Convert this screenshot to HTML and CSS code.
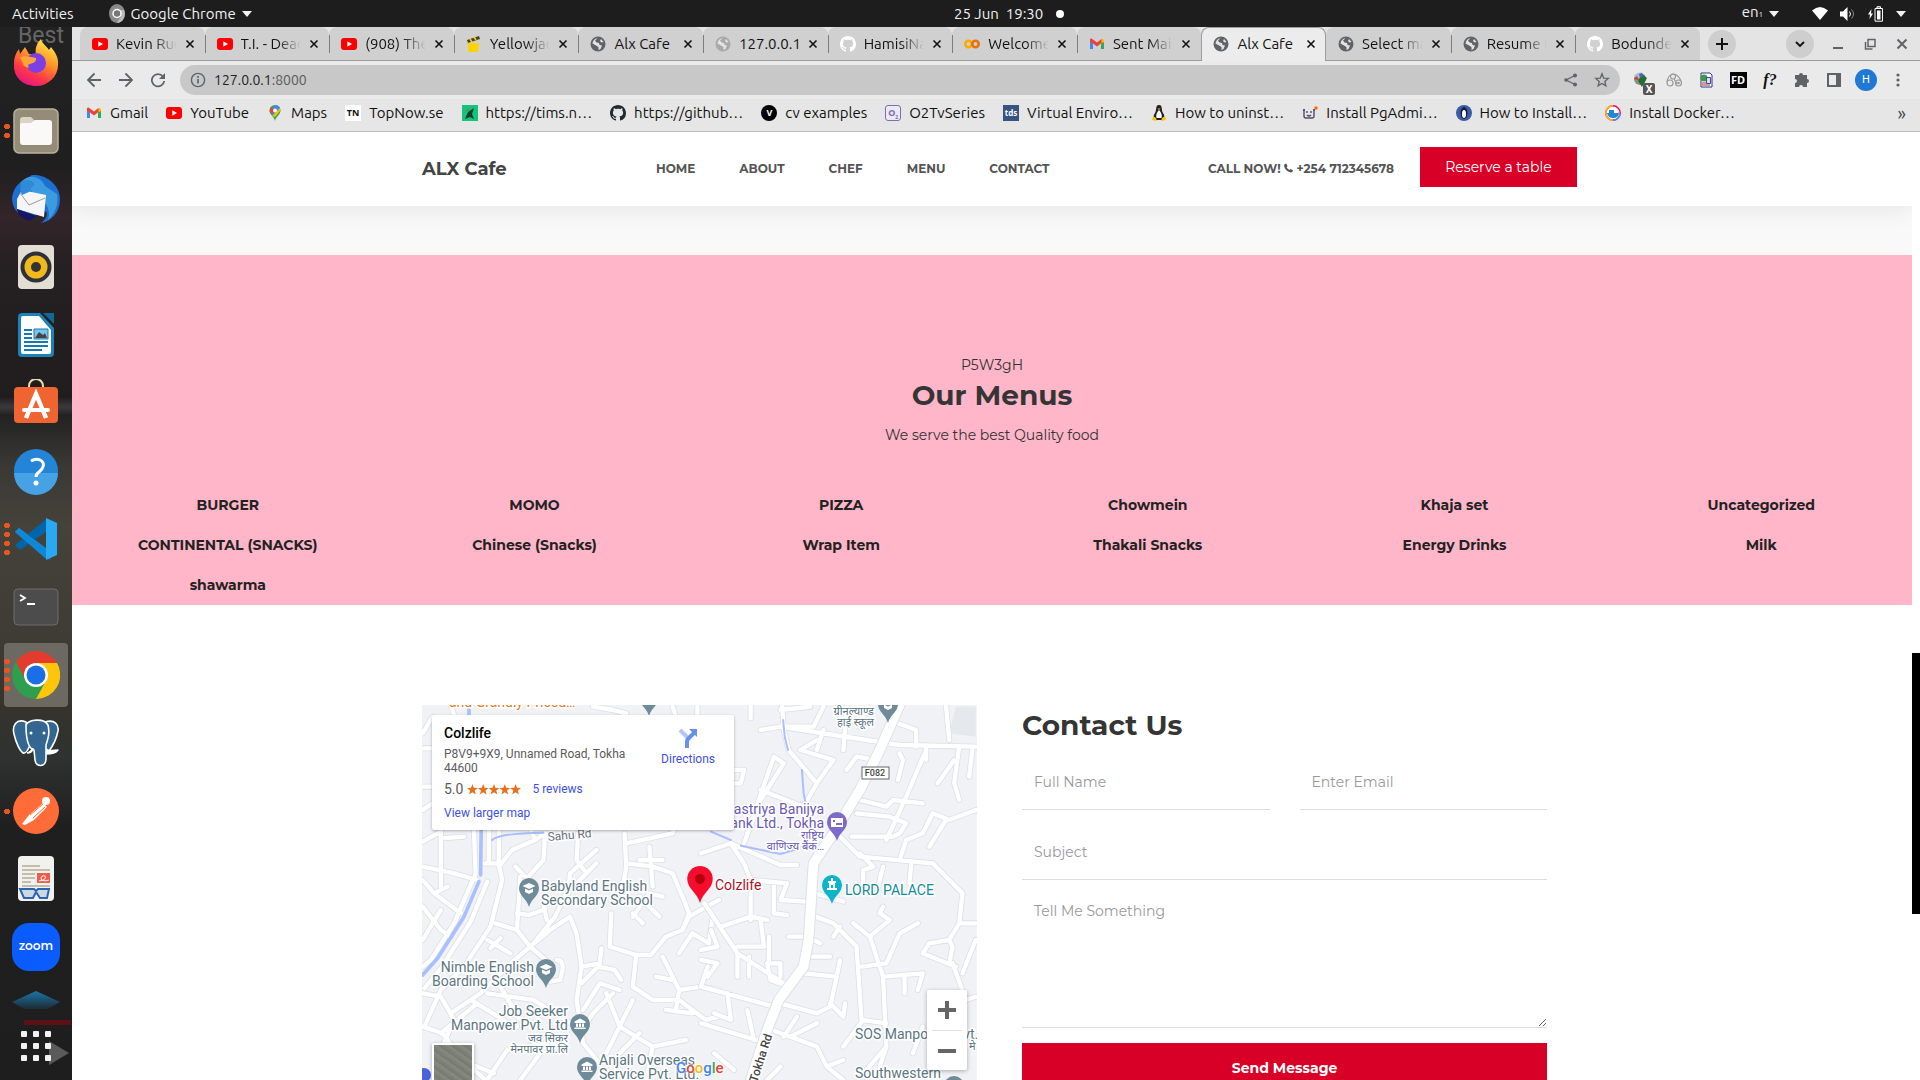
FILE: index.html
```html
<!DOCTYPE html>
<html lang="en">
<head>
<meta charset="utf-8">
<title>Alx Cafe</title>
<link rel="stylesheet" href="styles.css">
</head>
<body>
<svg class="defs" aria-hidden="true">
  <symbol id="yt" viewBox="0 0 16 16"><rect y="2" width="16" height="12" rx="3" fill="#f00"/><path d="M6.300 5.200v5.600L11 8z" fill="#fff"/></symbol>
  <symbol id="globe" viewBox="0 0 16 16"><circle cx="8" cy="8" r="7.500" fill="currentColor"/><path d="M7.500 2.200 5 4.500 6.500 6.500 9 7l.5 2L12 9.500 10.500 13 8.500 14V11L6 9.500 2.500 7.500a6 6 0 0 1 5-5.300zM11 3l2.500 3-2 .5L10 5z" fill="#e3e3e3"/></symbol>
  <symbol id="gh" viewBox="0 0 16 16"><path fill="currentColor" d="M8 0C3.580 0 0 3.580 0 8c0 3.540 2.290 6.530 5.470 7.590.4.070.55-.17.55-.38 0-.19-.01-.82-.01-1.490-2.010.37-2.530-.49-2.690-.94-.09-.23-.48-.94-.82-1.130-.28-.15-.68-.52-.01-.53.63-.01 1.080.58 1.230.82.72 1.210 1.870.87 2.330.66.07-.52.28-.87.51-1.070-1.780-.2-3.640-.89-3.640-3.950 0-.87.31-1.590.82-2.150-.08-.2-.36-1.020.08-2.120 0 0 .67-.21 2.200.82.640-.18 1.320-.27 2-.27s1.360.09 2 .27c1.530-1.040 2.200-.82 2.200-.82.44 1.100.16 1.920.08 2.120.51.56.82 1.270.82 2.150 0 3.070-1.870 3.750-3.650 3.950.29.25.54.73.54 1.480 0 1.070-.01 1.930-.01 2.200 0 .21.15.46.55.38A8.010 8.010 0 0 0 16 8c0-4.420-3.580-8-8-8z"/></symbol>
  <symbol id="gmail" viewBox="0 0 16 16"><path d="M1 4v9h3V7z" fill="#4285f4"/><path d="M15 4v9h-3V7z" fill="#34a853"/><path d="M12 7.500V4l1.500-1.200L15 4v2z" fill="#fbbc04"/><path d="M1 4c0-1.500 1.200-1.800 2.200-1.100L8 6.500l4.500-3.500v4L8 10.500 4 7.500 1 5.500z" fill="#ea4335"/></symbol>
  <symbol id="x" viewBox="0 0 16 16"><path d="m4.500 4.500 7 7m0-7-7 7" stroke="currentColor" stroke-width="1.600"/></symbol>
  <symbol id="caret" viewBox="0 0 10 6"><path d="M0 0h10L5 6z" fill="currentColor"/></symbol>
  <symbol id="pin" viewBox="0 0 20 29"><path d="M10 29C8 21 0 18 0 10a10 10 0 0 1 20 0c0 8-8 11-10 19z" fill="currentColor"/></symbol>
  <symbol id="cap" viewBox="0 0 20 29"><use href="#pin"/><path d="m3.500 8 6.500-3 6.500 3-6.500 3zM6 10.500v3.500l4 2 4-2v-3.500l-4 2z" fill="#fff"/></symbol>
  <symbol id="civic" viewBox="0 0 20 29"><use href="#pin"/><path d="M4.500 7.500 10 4.500l5.500 3V9h-11zM6 9.500h2V13H6zm3 0h2V13H9zm3 0h2V13h-2zM4.500 13.500h11V15h-11z" fill="#fff"/></symbol>
</svg>

<header class="topbar">
  <button>Activities</button>
  <button class="app-menu"><svg width="16" height="19" viewBox="0 0 16 19"><ellipse cx="8" cy="9.500" rx="8" ry="9.500" fill="#8a8a8a"/><path d="M8 6h7a8 9 0 0 1-7 13l4-7z" fill="#bbb"/><circle cx="8" cy="9.500" r="4" fill="#777" stroke="#fff" stroke-width="1.500"/></svg>Google Chrome<svg width="10" height="6"><use href="#caret"/></svg></button>
  <button class="clock">25 Jun&nbsp; 19:30<i class="dot"></i></button>
  <button class="lang"><span>en<small>1</small></span><svg width="10" height="6"><use href="#caret"/></svg></button>
  <button class="sys" aria-label="System">
    <svg width="16" height="13" viewBox="0 0 16 13"><path d="M0 3.500Q8-3.500 16 3.500L8 13z" fill="#fff"/></svg>
    <svg width="16" height="14" viewBox="0 0 16 14"><path d="M0 4.500h3L7.500 0v14L3 9.500H0z" fill="#fff"/><path d="M9.500 4.500q2 2.500 0 5" stroke="#fff" fill="none"/><path d="M11.500 2.500q4 4.500 0 9" stroke="#888" fill="none"/></svg>
    <svg width="16" height="16" viewBox="0 0 16 16"><path d="M3.500 3 0 8.500h2L1.500 13 5 7.500H3z" fill="#fff"/><path d="M7 2.500h7.500v12.700H7zM9 .7h3.500v1.500H9z" stroke="#fff" fill="none"/><path d="M9 4.500h3.500v9H9z" fill="#fff"/></svg>
    <svg width="10" height="6"><use href="#caret"/></svg>
  </button>
</header>

<div class="desktop">
<nav class="dock" aria-label="Dock">
  <span class="ghost-text">Best</span><i class="ghost-bar"></i><i class="ghost-play"></i>
  <button aria-label="Firefox"><svg viewBox="0 0 48 48"><defs><linearGradient id="ff" x1=".8" y1="0" x2=".3" y2="1"><stop offset="0" stop-color="#fff44f"/><stop offset=".4" stop-color="#ff9a28"/><stop offset=".75" stop-color="#ff3647"/><stop offset="1" stop-color="#e31587"/></linearGradient></defs><path d="M29 0c1 5 5 6 8 11l2-3c4 5 8 11 7 18A22 21 0 0 1 24 47C11 47 1 38 2 25 2 18 4 14 7 10l1 5 5-7 4 7 7 1c-1-6 0-11 5-16z" fill="url(#ff)"/><circle cx="24" cy="24" r="10" fill="#7b3fe4"/><path d="M8 18c7-2 11 0 16 1 1 5-5 5-8 7 2 5-2 2-4 1z" fill="#ffa436"/></svg></button>
  <button class="run2" aria-label="Files"><svg viewBox="0 0 48 48"><rect x="2" y="2" width="44" height="44" rx="5" fill="#948c78" stroke="#b9b29f" stroke-width="1.500"/><path d="M8 13q0-3 3-3h8l4 4h14q3 0 3 3v4H8z" fill="#d9d4c6"/><path d="M8 18q0-2 2-2h9l4-3h14q3 0 3 3v19q0 3-3 3H11q-3 0-3-3z" fill="#faf9f7"/></svg></button>
  <button aria-label="Thunderbird"><svg viewBox="0 0 48 48"><path d="M20 0c14-1 28 10 28 24 0 14-9 22-19 24 5-4 8-9 4-12L16 44C5 40 0 32 0 23 1 14 6 8 12 5z" fill="#1d6fd1"/><path d="M9 7c8-9 20-6 24 4l12 8c2 10-2 20-9 26 3-9-1-17-10-23z" fill="#3b9ae0"/><path d="m5 24 5-9 24 5-2 22-27-8z" fill="#f5f5f7"/><path d="m8 18 9 12 16-7" stroke="#999" fill="none"/><path d="m5 34 20 7-8 5C10 44 5 39 5 34z" fill="#1b1464"/><path d="M9 7q8-5 14 2-4 3-6 8l-7 3q-3-6-1-13z" fill="#2f8ad8"/></svg></button>
  <button aria-label="Rhythmbox"><svg viewBox="0 0 48 48"><rect x="6" y="2" width="36" height="44" rx="4" fill="#e2ded4"/><circle cx="24" cy="24" r="15.500" fill="#303038"/><circle cx="24" cy="24" r="11.500" fill="#f0b91c"/><circle cx="24" cy="24" r="5" fill="#333"/></svg></button>
  <button aria-label="LibreOffice Writer"><svg viewBox="0 0 48 48"><path d="M10 2h18l14 15v25q0 4-4 4H10q-4 0-4-4V6q0-4 4-4z" fill="#1b83b7"/><path d="M11 5h16l12 14v22q0 2-2 2H11q-2 0-2-2V7q0-2 2-2z" fill="#fff"/><path d="M31 2h11v11z" fill="#0f679c"/><path d="M12 19h8M12 23h8M12 27h8M12 31h24M12 35h24M12 39h18" stroke="#1878b0" stroke-width="2"/><path d="M22 18h14v10H22z" fill="#7cc4ec" stroke="#1878b0"/><path d="m23 27 4-6 4 3 2-2 2 5z" fill="#444"/></svg></button>
  <button aria-label="Software"><svg viewBox="0 0 48 48"><path d="M17 11V7a7 7 0 0 1 14 0v4" fill="none" stroke="#f3dba8" stroke-width="2"/><rect x="2" y="8" width="44" height="36" rx="4" fill="#ef6430"/><path d="m14 39 10-24 10 24" fill="none" stroke="#fff" stroke-width="4.500"/><path d="M12 31h24" stroke="#fff" stroke-width="4" stroke-linecap="round"/></svg></button>
  <button aria-label="Help"><svg viewBox="0 0 48 48"><circle cx="24" cy="24" r="22" fill="#2384d8"/><path d="M2 26a22 22 0 0 0 44 0z" fill="#46a2e4"/><path d="M19 14q5-3 9-1c6 3 3 9-1 12q-3 2-3 5" fill="none" stroke="#fff" stroke-width="3"/><circle cx="24" cy="36" r="2.500" fill="#fff"/></svg></button>
  <button class="run4" aria-label="Visual Studio Code"><svg viewBox="0 0 48 48"><path d="M3 17 7 13 38 36v9z" fill="#0a84d0"/><path d="M3 30 34 4v13L8 35z" fill="#0065a9"/><path d="M3 17 7 13 36 35v9l-3-1z" fill="#1088d8"/><path d="m34 3 11 5v32l-11 5z" fill="#28a9f2"/></svg></button>
  <button aria-label="Terminal"><svg viewBox="0 0 48 48"><rect x="2" y="6" width="44" height="36" rx="4" fill="#4c4c4c" stroke="#6c6c6c"/><path d="m8 12 5 3-5 3M15 21h8" fill="none" stroke="#fff" stroke-width="1.800"/></svg></button>
  <button class="run4 current" aria-label="Google Chrome"><svg viewBox="0 0 48 48"><circle cx="24" cy="24" r="24" fill="#2f9e4f"/><path d="M24 12h21a24 24 0 0 1-21 36l11-20z" fill="#fdc60a"/><path d="m4 11 9 17 11-16h21A24 24 0 0 0 4 11z" fill="#e33b2e"/><circle cx="24" cy="24" r="12" fill="#fff"/><circle cx="24" cy="24" r="9.500" fill="#1a6fe8"/></svg></button>
  <button aria-label="pgAdmin"><svg viewBox="0 0 48 48"><g fill="#336791" stroke="#fff" stroke-width="1.600" stroke-linejoin="round"><path d="M14 3C4-1 0 7 2 15c2 9 6 17 9 19 4 1 5-5 7-7zM33 3c10-3 14 3 13 9-2 10-6 16-9 20l-6-4z"/><path d="M14 6c3-6 18-7 22 0 2 8 0 14-2 20v14c0 8-10 9-11 1l-1-10c-8-2-8-18-8-25z"/><path d="M15 34q5 0 6-5M34 32l12-1q-3 4-12 4" fill="#fff"/></g><circle cx="19" cy="14" r="1.500" fill="#fff"/><circle cx="32" cy="14" r="1.500" fill="#fff"/></svg></button>
  <button class="run1" aria-label="Postman"><svg viewBox="0 0 48 48"><circle cx="24" cy="24" r="23" fill="#ff6c37"/><circle cx="34" cy="14" r="4" fill="#fff"/><path d="m31 16 4 4-13 13-9 5-3-1 7-9z" fill="#fff"/><path d="m18 28 13-11M21 31l12-11" stroke="#ff6c37"/></svg></button>
  <button aria-label="Document Viewer"><svg viewBox="0 0 48 48"><rect x="6" y="1" width="36" height="45" rx="4" fill="#f1f1ef"/><path d="M10 11h18M10 15h28M10 19h13M10 23h13M10 27h9M10 31h28" stroke="#c3bda9" stroke-width="2"/><path d="M25 18h13v10H25z" fill="#f15b4c"/><path d="M27 26q8-1 6-5-4-1-4 3 2 3 8 1" stroke="#fff" fill="none"/><path d="M8 34h14l2 2 2-2h11l-2 9h-7l-4-6-3 6h-9z" fill="#cfd8e2" stroke="#2a65b4" stroke-width="2"/></svg></button>
  <button aria-label="Zoom"><span class="zoom-icon">zoom</span></button>
  <button class="cut" aria-label="More"><svg viewBox="0 0 48 18"><defs><linearGradient id="vf" x2="0" y2="1"><stop stop-color="#1b75a8"/><stop offset="1" stop-color="#1b75a8" stop-opacity=".15"/></linearGradient></defs><path d="M24 0 48 11 36 18H12L0 11z" fill="url(#vf)"/></svg></button>
  <button class="apps" aria-label="Show applications"><i></i><i></i><i></i><i></i><i></i><i></i><i></i><i></i><i></i></button>
</nav>

<main class="window">
  <div class="tabstrip">
    <div class="tabs">
      <div class="tab"><svg><use href="#yt"/></svg><a href="#">Kevin Rudolf</a><button aria-label="Close"><svg><use href="#x"/></svg></button></div>
      <div class="tab"><svg><use href="#yt"/></svg><a href="#">T.I. - Dead And</a><button aria-label="Close"><svg><use href="#x"/></svg></button></div>
      <div class="tab"><svg><use href="#yt"/></svg><a href="#">(908) The Weeknd</a><button aria-label="Close"><svg><use href="#x"/></svg></button></div>
      <div class="tab"><svg viewBox="0 0 16 16"><path d="M2 7h11l-1 9H2z" fill="#fdd20a"/><path d="m1 4 12-4 1 3L2 7z" fill="#4a4320"/><path d="m4 3 2 3m2-5 2 3" stroke="#fdd20a" stroke-width="1.500"/></svg><a href="#">Yellowjackets</a><button aria-label="Close"><svg><use href="#x"/></svg></button></div>
      <div class="tab whole"><svg><use href="#globe"/></svg><a href="#">Alx Cafe</a><button aria-label="Close"><svg><use href="#x"/></svg></button></div>
      <div class="tab whole"><svg class="pale"><use href="#globe"/></svg><a href="#">127.0.0.1</a><button aria-label="Close"><svg><use href="#x"/></svg></button></div>
      <div class="tab"><svg class="white"><use href="#gh"/></svg><a href="#">HamisiNas</a><button aria-label="Close"><svg><use href="#x"/></svg></button></div>
      <div class="tab"><svg viewBox="0 0 16 16" fill="none" stroke-width="2.600"><circle cx="4.500" cy="8" r="3.200" stroke="#f9ab00"/><circle cx="11.500" cy="8" r="3.200" stroke="#e8710a"/></svg><a href="#">Welcome To</a><button aria-label="Close"><svg><use href="#x"/></svg></button></div>
      <div class="tab"><svg><use href="#gmail"/></svg><a href="#">Sent Mail - h</a><button aria-label="Close"><svg><use href="#x"/></svg></button></div>
      <div class="tab whole active"><svg><use href="#globe"/></svg><a href="#">Alx Cafe</a><button aria-label="Close"><svg><use href="#x"/></svg></button></div>
      <div class="tab"><svg><use href="#globe"/></svg><a href="#">Select match</a><button aria-label="Close"><svg><use href="#x"/></svg></button></div>
      <div class="tab"><svg><use href="#globe"/></svg><a href="#">Resume Build</a><button aria-label="Close"><svg><use href="#x"/></svg></button></div>
      <div class="tab"><svg class="white"><use href="#gh"/></svg><a href="#">Bodunde123</a><button aria-label="Close"><svg><use href="#x"/></svg></button></div>
    </div>
    <button class="round" aria-label="New tab"><svg width="16" height="16" viewBox="0 0 16 16"><path d="M8 2v12M2 8h12" stroke="#111" stroke-width="2"/></svg></button>
    <button class="round search" aria-label="Search tabs"><svg width="16" height="16" viewBox="0 0 16 16"><path d="m4 6 4 4 4-4" stroke="#111" stroke-width="1.800" fill="none"/></svg></button>
    <div class="winctl">
      <button aria-label="Minimize"><svg viewBox="0 0 16 16"><path d="M3 12h10" stroke="#5f6368" stroke-width="2"/></svg></button>
      <button aria-label="Restore"><svg viewBox="0 0 16 16"><path d="M6 3.500h7v7H6zM3.500 6v7h7" fill="none" stroke="#5f6368" stroke-width="1.500"/></svg></button>
      <button aria-label="Close window"><svg viewBox="0 0 16 16"><path d="m3.500 3.500 9 9m0-9-9 9" stroke="#5f6368" stroke-width="2"/></svg></button>
    </div>
  </div>

  <div class="toolbar">
    <div class="navbtns">
      <button aria-label="Back"><svg viewBox="0 0 16 16"><path d="M15 8H2m6.500-6.500L2 8l6.500 6.500" fill="none" stroke="#5f6368" stroke-width="1.800"/></svg></button>
      <button aria-label="Forward"><svg viewBox="0 0 16 16"><path d="M1 8h13M7.500 1.500 14 8l-6.500 6.500" fill="none" stroke="#5f6368" stroke-width="1.800"/></svg></button>
      <button aria-label="Reload"><svg viewBox="0 0 16 16"><path d="M13 4.500A6.200 6.200 0 1 0 14.200 9" fill="none" stroke="#5f6368" stroke-width="1.800"/><path d="M15 1v6H9z" fill="#5f6368"/></svg></button>
    </div>
    <div class="omnibox">
      <svg width="16" height="16" viewBox="0 0 16 16"><circle cx="8" cy="8" r="6.600" fill="none" stroke="#5f6368" stroke-width="1.400"/><path d="M8 7v4.500M8 4v1.700" stroke="#5f6368" stroke-width="1.700"/></svg>
      <span class="url"><b>127.0.0.1</b>:8000</span>
      <button aria-label="Share"><svg viewBox="0 0 16 16"><path d="M13 3.500 4 8l9 4.500" fill="none" stroke="#5f6368" stroke-width="1.300"/><g fill="#5f6368"><circle cx="13" cy="3.500" r="2"/><circle cx="4" cy="8" r="1.800"/><circle cx="13" cy="12.500" r="2"/></g></svg></button>
      <button aria-label="Bookmark"><svg viewBox="0 0 16 16"><path d="m8 1.800 1.700 4.300 4.600.3-3.500 3 1.100 4.500L8 11.500l-3.900 2.400 1.100-4.500-3.500-3 4.600-.3z" fill="none" stroke="#5f6368" stroke-width="1.300"/></svg></button>
    </div>
    <div class="ext">
      <button aria-label="Download manager"><svg viewBox="0 0 18 18"><circle cx="7" cy="8" r="6" fill="#8b8f86"/><path d="M1 5q4-5 9-3L6 8z" fill="#b4bcc2"/><path d="m9 3 5 4-5 9-4-6z" fill="#276c2f"/><path d="m1 8 3-3 2 4z" fill="#c93b2c"/><path d="m6 3 3-1 1 4-3 1z" fill="#3a6ac8"/></svg><span class="badge">X</span></button>
      <button aria-label="Links"><svg viewBox="0 0 18 18" fill="none" stroke="#9a9a9a" stroke-width="1.200"><circle cx="5" cy="12" r="3"/><circle cx="13.500" cy="12" r="3"/><circle cx="13.500" cy="12" r=".7"/><circle cx="8" cy="5.500" r="2.500"/><path d="M2 11q1-7 6-8 5 0 8 7M9 8l3 5"/></svg></button>
      <button aria-label="Page info"><svg viewBox="0 0 18 18"><path d="M4 2h9l2 2v12H4z" fill="#fff" stroke="#338"/><circle cx="7" cy="7" r="3.500" fill="#3a9a4a"/><path d="M5 12h8M5 14h8" stroke="#a33"/><path d="M9.500 6.500h4v6h-4z" fill="#dde" stroke="#44a"/></svg></button>
      <button aria-label="FD"><span class="fd">FD</span></button>
      <button aria-label="Font finder"><span class="ff">f?</span></button>
      <button aria-label="Extensions"><svg viewBox="0 0 18 18"><path d="M6 4a2 2 0 1 1 4 0h4v4a2 2 0 1 1 0 4v4h-4a2 2 0 0 0-4 0H2v-4a2 2 0 0 0 0-4V4z" fill="#5f6368"/></svg></button>
      <button aria-label="Side panel"><svg viewBox="0 0 18 18"><path d="M3 3h12v12H3z" fill="none" stroke="#5f6368" stroke-width="2"/><path d="M11 3h4v12h-4z" fill="#5f6368"/></svg></button>
      <button aria-label="Profile"><span class="avatar">H</span></button>
      <button aria-label="Menu"><svg viewBox="0 0 18 18" fill="#5f6368"><circle cx="9" cy="4" r="1.600"/><circle cx="9" cy="9" r="1.600"/><circle cx="9" cy="14" r="1.600"/></svg></button>
    </div>
  </div>

  <nav class="bookmarks" aria-label="Bookmarks">
    <a href="#"><svg><use href="#gmail"/></svg>Gmail</a>
    <a href="#"><svg><use href="#yt"/></svg>YouTube</a>
    <a href="#"><svg viewBox="0 0 16 16"><path d="M8 0a5.500 5.500 0 0 1 5.500 5.500C13.500 10 9 11 8 16c-1-5-5.500-6-5.500-10.500A5.500 5.500 0 0 1 8 0z" fill="#34a853"/><path d="M8 0a5.500 5.500 0 0 1 5 3L5 10 3 7z" fill="#4285f4"/><path d="M4 2 2.500 6l2 3L8 5z" fill="#ea4335"/><path d="M13 3 5 11l3 1 5-6z" fill="#fbbc04"/><circle cx="8" cy="5.500" r="2" fill="#fff"/></svg>Maps</a>
    <a href="#"><i class="fav tn">TN</i>TopNow.se</a>
    <a href="#"><svg viewBox="0 0 16 16"><path d="M0 0h16v16H0z" fill="#12c579"/><path d="m3 14 3-7 6-4-2 6 2 5-4-2z" fill="#173d2d"/><path d="m4 6 3-2" stroke="#e43"/></svg>https://tims.n…</a>
    <a href="#"><svg><use href="#gh"/></svg>https://github…</a>
    <a href="#"><i class="fav v">V</i>cv examples</a>
    <a href="#"><i class="fav o2">O<sub>2</sub></i>O2TvSeries</a>
    <a href="#"><i class="fav tds">tds</i>Virtual Enviro…</a>
    <a href="#"><svg viewBox="0 0 16 16"><path d="M8 0c4 0 2 5 4 8s2 6-1 7H5c-3-1-3-4-1-7s0-8 4-8z" fill="#222"/><path d="M8 5c2 2 3.500 5 2.500 8h-5C4.500 10 6 7 8 5z" fill="#fff"/><path d="m2 11 3 2 1 3-5-1zm12 0-3 2-1 3 5-1zM6.500 3.500h3L8 5z" fill="#f5c518"/></svg>How to uninst…</a>
    <a href="#"><svg viewBox="0 0 16 16" fill="none" stroke="#54496f" stroke-width="1.400"><path d="M2 4v7q0 2 2 2h6q2 0 2-2V4M1 5h2m8 0h2M5 6v2m4-2v2M5 10q2 2 4 0"/><circle cx="14" cy="3" r="1" stroke="#f60" fill="#f60"/></svg>Install PgAdmi…</a>
    <a href="#"><svg viewBox="0 0 16 16"><circle cx="8" cy="8" r="8" fill="#3b5aa8"/><ellipse cx="8" cy="8" rx="3.500" ry="6" fill="#182038"/><ellipse cx="8" cy="9" rx="2" ry="4" fill="#fff"/></svg>How to Install…</a>
    <a href="#"><svg viewBox="0 0 16 16"><circle cx="8" cy="8" r="7.200" fill="#fff" stroke="#f06" stroke-width="1.500"/><path d="M8 .8A7.200 7.200 0 0 0 8 15.200" stroke="#fb0" stroke-width="1.500" fill="none"/><path d="M8 15.200A7.200 7.200 0 0 0 15 9" stroke="#39f" stroke-width="1.500" fill="none"/><path d="M2 8h11l1-1q0 6-6 6-5 0-6-5zM4 5h5v3H4z" fill="#2387d8"/></svg>Install Docker…</a>
    <button aria-label="More bookmarks">»</button>
  </nav>

  <div class="viewport">
    <div class="site">
      <header class="site-head">
        <div class="container">
          <a class="brand" href="#">ALX Cafe</a>
          <nav><a href="#">HOME</a><a href="#">ABOUT</a><a href="#">CHEF</a><a href="#">MENU</a><a href="#">CONTACT</a></nav>
          <a class="call" href="#">CALL NOW! <svg width="9" height="10" viewBox="0 0 10 10"><path d="M2.500 0 4 3 2.800 4.200Q4 6.300 5.900 7.200L7 6l3 1.500Q9.500 10 7.500 10 1 8 0 2.500 0 .5 2.500 0z" fill="currentColor"/></svg> +254 712345678</a>
          <button class="reserve">Reserve a table</button>
        </div>
      </header>
      <div class="gap"></div>
      <section class="menus">
        <p>P5W3gH</p>
        <h2>Our Menus</h2>
        <p class="sub">We serve the best Quality food</p>
        <div class="cats">
          <a href="#">BURGER</a><a href="#">MOMO</a><a href="#">PIZZA</a><a href="#">Chowmein</a><a href="#">Khaja set</a><a href="#">Uncategorized</a>
          <a href="#">CONTINENTAL (SNACKS)</a><a href="#">Chinese (Snacks)</a><a href="#">Wrap Item</a><a href="#">Thakali Snacks</a><a href="#">Energy Drinks</a><a href="#">Milk</a>
          <a href="#">shawarma</a>
        </div>
      </section>
      <section class="contact container">
        <div class="map">
          <svg class="canvas" width="555" height="450" viewBox="0 0 555 450">
            <rect width="555" height="450" fill="#f0f2f5"/>
            <defs>
              <path id="rl" d="M5 425 60 395V560M60 415l70-5M5 500l95 20 70 20M5 540l35 40 40-20M40 580l80 60M5 620l55 70 30 20M5 720l55-90M5 145h30M5 260h30M5 330l30-20M5 100l30-50M90 15l10 30M205 390V490M160 390l5 130-65 150-70 110-25 20M200 545l-50 120-90 140-50 60M235 390V490h-45M235 490l10 50-35 140-80 120-70 70-50 110M330 385l15 35 30-20-5 80-50 55-35-35M345 420l-70 30-40 50M475 400l-5 80 30 40-60 60-35 70-65 80M530 450l-80 70-5 60M500 520l30-30M300 530l-10 160 40 50 70 60M225 670l65 20M290 640l35 5 45-15M380 660l-10-50 10-20M450 650l20 50 15 100-15 100 20 130 50 60M450 650l-60 40-60 50-70 60-80 80-90 60M240 715l-30 30M200 720l70 40M485 800l55-10 5-45M485 850l50-50 50 10 20 30M600 870l-60-20-50 80M480 1000l40-60 60-60M575 640l-5 100 80 25h45l45-55 50-20 20-40 90-50M650 765l-10 95 60 40h80l80 60 40-10M615 400l5 100-10 60-30 40M620 430l140-30 20-50M620 490l80 10 60 20 30 70 20 50-20 50M690 440l10 120M660 480h70M640 650l50-70 40 10M660 590l60 60M640 640l30 30M730 770l50 100 70-10 50 10M780 870l-10 60M780 760l40-60 50 30 10-70M760 840l-50-10M560 880l40 100-40 80M640 900l-40 80 100 60 100-20M700 1040l-20 100M600 1060l60-60M740 930l80 10M200 880l140 20 130 80M5 880l55 10 40 70-40 90M240 860l60 100M150 900l100 60M410 780q30 0 10 60l-30 5M5 980l60 20 60 80 70 60M60 1000l110-90M180 990l60-30 50 20M200 1140l60-90 120-20M120 1080l100 40M300 1140l60-80M520 20l60 10 40 10M835 20v30M760 20l10 30"/>
              <path id="rr" d="M150 15v40M180 90l60-10 260 40 100 15 230 5M245 20l5 70M250 80h90l30-60M350 150l20-60M430 150l10-120M500 20l-20 60M330 20l-90 10M740 15l10 105M650 140V90l-80-30M780 140l-15 110 15 50M765 180l-50 70M250 90l15 60 85 100 50-70-100-30 50-30M350 250l-40 70M220 170l30 20-70 110-50 130M220 170l-80 230M180 270l130 50M100 210h30l-10 40H90M440 210l30-40 60 10M600 160l10 20-15 60M680 140v40M680 150l-60 140-60 130M480 300l80 20 20-20 90 10M470 340l100 10 50 20-20 30-20 10H455M820 150l-10 80M410 400l70 70 220 20 90 90-10 90M600 480l20-60 50-20 30-60 50 20 80-30M690 440l50-80M480 460l40 40-30 10v40M550 500l-20 80M635 490l-5 60M0 460l90-30 40 60 20 50v120M90 430l150 65h50M150 540l110 10-20 50 80 5M220 550v90l40 5M345 580l85 25M10 610l100 150 140 90M60 680l90-30 50 10M180 660l10 80h-80M110 760v70M145 770v60M205 710v80h35v40M265 710h55l40 20M325 770h65M200 790l10 50 40 15M0 750l50-10-20-50M0 780l50 10-30 40M345 650l55 20 70 70 15 220 75 10M400 710l20-30M460 670l50 40 60-50-30-20 10-20M510 710l40 120 10 210-20 60M485 800l75-10 40-90 55-30M550 830l120-10-15 50M615 830v50M310 820l100 10-20 90-40 20-110-30M390 910l40 40 5-40M410 830l10-50M780 670h50M780 670l-30 50-60 10-20 30 100 40M750 720l10 20-10 50M760 790l40 110 30-10M830 720l-40 100M0 860l240 65M80 880l10 80-50-20M0 970l200 60M215 990l135 50 30 60 50 40M250 1010l40-60M270 1010l80-40M140 930l20 90M0 860l20-60M430 1040l60-80M560 1040l-60 70M40 1060l60 50M240 1100l-40 40M380 1100l50-20M640 1060l30-80"/>
            </defs>
            <g transform="translate(-1 -5) scale(.331 .3333)" fill="none" stroke-linecap="round" stroke-linejoin="round">
              <use href="#rl" stroke="#dde0e7" stroke-width="18"/><use href="#rl" stroke="#fff" stroke-width="13"/>
              <path d="M145 20v25M182 385l-2 140M175 545l-45 105-80 125-45 50" stroke="#a9bfff" stroke-width="11"/><path d="M215 420q20-20 155-22" stroke="#a9bfff" stroke-width="6"/>
            </g>
            <g transform="translate(279 -5) scale(.331 .3333)" fill="none" stroke-linecap="round" stroke-linejoin="round">
              <path d="M770 20h60v90l-80-10z" fill="#e5e8ec"/>
              <use href="#rr" stroke="#dde0e7" stroke-width="18"/><use href="#rr" stroke="#fff" stroke-width="13"/>
              <path d="m600 15-60 135-60 120-80 130-60 90-15 230-15 80-75 100-35 90-50 150" stroke="#dde0e7" stroke-width="35"/>
              <path d="m600 15-60 135-60 120-80 130-60 90-15 230-15 80-75 100-35 90-50 150" stroke="#fff" stroke-width="29"/>
              <path d="M248 60l5 50 10 40M305 210l5 70 5 25M30 395l60 25M120 437l120 25 50-15" stroke="#a9bfff" stroke-width="6"/>
            </g>
            <g class="lbl">
              <text x="27" y="2" class="food">and Grandly Priced…</text>
              <text x="126" y="136" transform="rotate(-5 126 136)" class="road">Sahu Rd</text>
              <text x="119" y="186">Babyland English</text><text x="119" y="200">Secondary School</text>
              <text x="112" y="267" class="end">Nimble English</text><text x="112" y="281" class="end">Boarding School</text>
              <text x="146" y="311" class="end">Job Seeker</text><text x="146" y="325" class="end">Manpower Pvt. Ltd</text>
              <text x="146" y="337" class="end hi">जव सिकर</text><text x="146" y="348" class="end hi">मेनपावर प्रा.लि</text>
              <text x="177" y="360">Anjali Overseas</text><text x="177" y="374">Service Pvt. Ltd.</text>
              <text x="293" y="185" class="red">Colzlife</text>
              <text x="452" y="10" class="end hi">ग्रीनल्याण्ड</text><text x="452" y="21" class="end hi">हाई स्कूल</text>
              <text x="402" y="109" class="end bank">Rastriya Banijya</text><text x="402" y="123" class="end bank">Bank Ltd., Tokha</text>
              <text x="402" y="134" class="end bank hi">राष्ट्रिय</text><text x="402" y="145" class="end bank hi">वाणिज्य बैंक…</text>
              <text x="423" y="190" class="teal">LORD PALACE</text>
              <text x="433" y="334">SOS Manpower Pvt.</text><text x="547" y="345" class="hi">मे</text>
              <text x="433" y="373">Southwestern</text>
              <text x="335" y="378" transform="rotate(-72 335 378)" class="road dark">Tokha Rd</text>
            </g>
            <rect x="440" y="62" width="27" height="12" fill="#fff" stroke="#666"/><text x="453" y="71" class="shield">F082</text>
            <g class="slate">
              <use href="#cap" x="97" y="173" width="20" height="29"/><use href="#cap" x="114" y="254" width="20" height="29"/>
              <use href="#civic" x="148" y="309" width="20" height="29"/><use href="#civic" x="155" y="352" width="20" height="29"/>
              <use href="#cap" x="456" y="-11" width="20" height="29"/><use href="#pin" x="217" y="-18" width="20" height="29"/><use href="#cap" x="522" y="371" width="20" height="29"/>
            </g>
            <use href="#pin" x="405" y="107" width="20" height="29" color="#7e6bc9"/><path d="M409 113h12v9h-12z" fill="#fff"/><path d="M411 116h2m1 3h6" stroke="#7e6bc9" stroke-width="2"/>
            <use href="#pin" x="400" y="170" width="20" height="29" color="#0cb5cc"/><path d="M405 185v-2h2v-5h-1v-2h3v-3h2v3h3v2h-1v5h2v2zm4-2h2v-3h-2z" fill="#fff"/>
            <use href="#pin" x="265" y="161" width="26" height="37" color="#f60d2e"/><circle cx="278" cy="174" r="5" fill="#b3000d"/>
            <circle cx="2" cy="370" r="7" fill="#4a63d8"/>
          </svg>
          <div class="card">
            <div class="info">
              <strong>Colzlife</strong>
              <p>P8V9+9X9, Unnamed Road, Tokha 44600</p>
              <div class="rating"><span>5.0</span><svg width="54" height="11" viewBox="0 0 55 11" fill="#e7711b"><path id="st" d="m5.500 0 1.400 3.800 4.100.2-3.200 2.500 1.100 4-3.400-2.300-3.400 2.300 1.100-4L0 4l4.100-.2z"/><use href="#st" x="11"/><use href="#st" x="22"/><use href="#st" x="33"/><use href="#st" x="44"/></svg><a href="#">5 reviews</a></div>
              <a href="#">View larger map</a>
            </div>
            <a class="dir" href="#"><svg width="20" height="20" viewBox="0 0 20 20"><path d="m2 2 8 8" stroke="#b5c8f5" stroke-width="4"/><path d="M9 20v-6q0-3 3-5l4-4" fill="none" stroke="#6a8fe8" stroke-width="4"/><path d="M11 1h8v8z" fill="#6a8fe8"/></svg>Directions</a>
          </div>
          <button class="sat" aria-label="Satellite view"></button>
          <div class="glogo"><span class="b">G</span><span class="r">o</span><span class="y">o</span><span class="b">g</span><span class="g">l</span><span class="r">e</span></div>
          <div class="zoomer"><button aria-label="Zoom in"><svg width="18" height="18" viewBox="0 0 18 18"><path d="M9 0v18M0 9h18" stroke="#666" stroke-width="4"/></svg></button><button aria-label="Zoom out"><svg width="18" height="18" viewBox="0 0 18 18"><path d="M0 9h18" stroke="#666" stroke-width="4"/></svg></button></div>
        </div>
        <form class="form">
          <h2>Contact Us</h2>
          <div class="pair"><input type="text" aria-label="Full Name" placeholder="Full Name"><input type="email" aria-label="Enter Email" placeholder="Enter Email"></div>
          <input type="text" aria-label="Subject" placeholder="Subject">
          <textarea aria-label="Tell Me Something" placeholder="Tell Me Something"></textarea>
          <button type="button">Send Message</button>
        </form>
      </section>
    </div>
    <div class="scroll"><i></i></div>
  </div>
</main>
</div>
</body>
</html>
```
FILE: styles.css
```css
* { box-sizing: border-box; }
body {
  margin: 0;
  height: 100vh;
  display: flex;
  flex-direction: column;
  overflow: hidden;
  font: 15px/20px Ubuntu, "Noto Sans", sans-serif;
  color: #111;
}
button { border: 0; padding: 0; background: none; font: inherit; color: inherit; }
a { color: inherit; text-decoration: none; }
svg { display: block; flex: none; }
.defs { position: absolute; width: 0; height: 0; }

/* GNOME top bar */
.topbar {
  position: relative;
  z-index: 2;
  display: flex;
  align-items: center;
  height: 27px;
  flex: none;
  padding: 0 14px 0 12px;
  background: #1d1d1d;
  color: #f2f2f2;
}
.topbar button { display: flex; align-items: center; gap: 6px; }
.topbar .app-menu { margin-left: 35px; }
.topbar .clock { position: absolute; left: 50%; margin-left: -6px; gap: 13px; }
.dot { width: 8px; height: 8px; border-radius: 50%; background: #fff; }
.lang { margin-left: auto; }
.lang small { font-size: 8px; }
.topbar .sys { margin-left: 33px; gap: 12px; }

.desktop { flex: 1; display: flex; min-height: 0; }

/* Dock */
.dock {
  position: relative;
  width: 72px;
  flex: none;
  overflow: hidden;
  display: flex;
  flex-direction: column;
  align-items: center;
  padding-top: 2px;
  background: linear-gradient(#222 0, #1f1f20 140px, #33252a 190px, #252022 240px, #201d1f 370px, #3a3a3c 380px, #222 388px, #3a3935 440px, #45423a 500px, #3f3c35 610px, #35332c 680px, #2f3230 730px, #1f1f1f 800px, #1e1e1e);
}
.dock button {
  position: relative;
  width: 64px;
  height: 64px;
  margin: 2px 0;
  flex: none;
  display: flex;
  align-items: center;
  justify-content: center;
  border-radius: 4px;
}
.dock svg { width: 48px; height: 48px; }
.dock .current { background: #6b6962; }
.run1::before, .run2::before, .run4::before {
  content: "";
  position: absolute;
  left: 0;
  width: 6px;
  background: radial-gradient(circle, #e95420 3px, transparent 3px) 0 0 / 6px 9px;
}
.run1::before { height: 9px; }
.run2::before { height: 18px; }
.run4::before { height: 36px; }
.zoom-icon {
  width: 48px;
  height: 48px;
  border-radius: 17px;
  background: #0b5cff;
  color: #fff;
  font: 600 12px/46px Montserrat, Inter, sans-serif;
}
.dock .cut { height: 18px; margin: 10px 0 0; }
.dock .cut svg { height: 18px; }
.dock .apps {
  height: 30px;
  width: 30px;
  margin-top: 22px;
  display: grid;
  grid-template-columns: repeat(3, 6px);
  gap: 6px;
}
.apps i { width: 6px; height: 6px; border-radius: 1px; background: #f2f2f2; }
.ghost-text { position: absolute; left: 18px; top: -5px; font: 23px/28px Roboto, sans-serif; color: #666; }
.ghost-bar { position: absolute; left: 24px; right: 1px; bottom: 55px; height: 5px; background: #5c1214; }
.ghost-play { position: absolute; left: 49px; bottom: 15px; border: 12px solid transparent; border-left: 20px solid #5a5a5a; border-right: 0; }

/* Browser window */
.window { flex: 1; min-width: 0; display: flex; flex-direction: column; }
.tabstrip {
  height: 34px;
  flex: none;
  display: flex;
  align-items: center;
  padding: 0 2px 0 8px;
  background: #e4e4e4;
  border-bottom: 1px solid #9c9c9c;
}
.tabs { flex: 1; display: flex; align-self: stretch; min-width: 0; }
.tab {
  position: relative;
  flex: 1 1 0;
  min-width: 0;
  height: 33px;
  display: flex;
  align-items: center;
  gap: 8px;
  padding: 0 7px 0 12px;
  background: #d0d0d0;
  border-radius: 8px 8px 0 0;
}
.tab + .tab::before { content: ""; position: absolute; left: 0; top: 8px; height: 18px; width: 1px; background: #7d7d7d; }
.tab svg { width: 16px; height: 16px; color: #5f6368; }
.tab .pale { color: #a9a9a9; }
.tab .white { color: #fff; }
.tab a {
  flex: 1;
  min-width: 0;
  overflow: hidden;
  white-space: nowrap;
  -webkit-mask-image: linear-gradient(90deg, #000 60%, transparent 98%);
  mask-image: linear-gradient(90deg, #000 60%, transparent 98%);
}
.tab button { margin-left: -4px; }
.tab button svg { color: #111; }
.tab.active { height: 34px; background: #ececec; border: 1px solid #9c9c9c; border-bottom: 0; padding: 0 6px 1px 11px; }
.tab.active::before, .tab.active + .tab::before { display: none; }
.tab.whole a { -webkit-mask-image: none; mask-image: none; }
.round { width: 28px; height: 28px; border-radius: 50%; background: #cecece; display: grid; place-items: center; margin-left: 8px; }
.search { margin: 0 8px 0 50px; }
.winctl { display: flex; }
.winctl button { width: 32px; height: 32px; display: grid; place-items: center; }
.winctl svg { width: 16px; height: 16px; }

.toolbar { height: 38px; flex: none; display: flex; align-items: center; padding: 0 6px; background: #eaeaea; }
.navbtns, .ext { display: flex; }
.navbtns button, .ext button { position: relative; width: 32px; height: 32px; display: grid; place-items: center; }
.navbtns svg { width: 16px; height: 16px; }
.ext { margin-left: 6px; }
.ext svg { width: 18px; height: 18px; }
.badge { position: absolute; right: 3px; bottom: 1px; width: 12px; height: 12px; border-radius: 2px; background: #555; color: #fff; font: 700 10px/12px "Noto Sans", sans-serif; }
.fd { width: 17px; height: 16px; background: #000; color: #fff; font: 700 11px/16px "Noto Sans", sans-serif; }
.ff { font: italic 700 16px/20px "Liberation Serif", serif; }
.avatar { width: 22px; height: 22px; border-radius: 50%; background: #1f79d4; color: #fff; font: 11px/22px Roboto, sans-serif; }
.omnibox {
  flex: 1;
  height: 30px;
  margin-left: 6px;
  display: flex;
  align-items: center;
  padding: 0 10px;
  border-radius: 15px;
  background: #c8c8c8;
}
.url { flex: 1; margin-left: 8px; font-size: 14px; color: #5a5a5a; }
.url b { font-weight: 400; color: #222; }
.omnibox button { width: 16px; margin-left: 16px; }

.bookmarks {
  height: 33px;
  flex: none;
  display: flex;
  align-items: center;
  gap: 18px;
  padding: 0 14px 4px 14px;
  background: #e6e6e6;
  border-bottom: 1px solid #bdbdbd;
}
.bookmarks a { display: flex; align-items: center; gap: 8px; white-space: nowrap; }
.bookmarks svg { width: 16px; height: 16px; color: #24292f; }
.bookmarks > button { margin-left: auto; font-size: 18px; color: #444; }
.fav { width: 16px; height: 16px; font: 700 9px/16px "Noto Sans", sans-serif; text-align: center; background: #fff; }
.v { border-radius: 50%; background: #000; color: #fff; }
.o2 { border: 1px solid #7a70ac; border-radius: 3px; line-height: 13px; color: #7a70ac; background: #ece9f5; }
.o2 sub { font-size: 5px; line-height: 1px; }
.tds { background: #35547f; color: #fff; font-size: 8px; }

/* Cafe site */
.viewport { flex: 1; min-height: 0; display: flex; }
.site { flex: 1; min-width: 0; overflow: hidden; font: 400 14px/20px Montserrat, Inter, sans-serif; color: #333; background: #fff; }
.scroll { width: 8px; flex: none; background: #fff; }
.scroll i { display: block; height: 261px; margin-top: 521px; background: #000; }
.container { max-width: 1170px; margin: 0 auto; padding: 0 15px; }
.site-head { height: 74px; position: relative; background: #fff; box-shadow: 0 4px 24px rgba(0, 0, 0, .08); }
.site-head .container { height: 100%; padding-right: 0; display: flex; align-items: center; }
.brand { font-size: 18px; font-weight: 700; color: #444; width: 234px; }
.site-head nav { display: flex; gap: 44px; }
.site-head nav a, .call { font-size: 12px; font-weight: 700; color: #555; }
.call { margin-left: auto; white-space: pre; }
.call svg { display: inline; }
.reserve { width: 157px; height: 40px; margin: 0 0 4px 26px; background: #d90028; color: #fff; }
.gap { height: 49px; background: #f9f9f9; }
.menus { background: #ffb6c9; text-align: center; padding-top: 100px; }
.menus p { margin: 0; }
h2 { margin: 0; font-size: 28px; line-height: 40px; font-weight: 700; color: #353535; }
.menus .sub { margin-top: 10px; }
.cats { display: grid; grid-template-columns: repeat(6, 1fr); padding-top: 40px; }
.cats a { padding-left: 5px; line-height: 40px; font-weight: 700; color: #222; }
.contact.container { padding-top: 100px; padding-right: 30px; display: grid; grid-template-columns: 555fr 525fr; gap: 45px; }

.map { position: relative; height: 450px; overflow: hidden; font-family: Roboto, sans-serif; font-weight: 400; }
.lbl text { font: 14px Roboto, "Noto Sans", sans-serif; fill: #5b7683; stroke: #fff; stroke-width: 3px; paint-order: stroke; }
.lbl .end { text-anchor: end; }
.lbl .hi { font-size: 11px; }
.lbl .road { font-size: 12px; fill: #6b7380; }
.lbl .dark { fill: #444; font-weight: 500; }
.lbl .red { fill: #b3101f; }
.lbl .bank { fill: #6a58b8; }
.lbl .teal { fill: #128c99; }
.lbl .food { fill: #e07a1a; }
.shield { font: 500 9px Roboto, sans-serif; text-anchor: middle; fill: #444; }
.slate { color: #6f8b99; }
.card {
  position: absolute;
  left: 10px;
  top: 10px;
  width: 302px;
  height: 115px;
  display: flex;
  justify-content: space-between;
  padding: 9px 19px 0 12px;
  background: #fff;
  border-radius: 2px;
  box-shadow: 0 1px 3px rgba(0, 0, 0, .3);
  font-size: 12px;
  line-height: 14px;
  color: #5b5b5b;
}
.card a { color: #3f4fe6; }
.info { width: 190px; }
.info strong { display: block; font-size: 14px; line-height: 18px; font-weight: 500; color: #000; }
.info p { margin: 5px 0 7px; }
.rating { display: flex; align-items: center; gap: 4px; margin-bottom: 10px; }
.rating span { font-size: 14px; }
.rating a { margin-left: 7px; }
.dir { display: flex; flex-direction: column; align-items: center; gap: 4px; padding-top: 4px; }
.sat { position: absolute; left: 10px; top: 338px; width: 42px; height: 42px; border: 2px solid #fff; background: repeating-linear-gradient(35deg, #7d8077 0 2px, #85877e 2px 5px, #777b71 5px 7px); box-shadow: 0 1px 4px rgba(0, 0, 0, .3); }
.glogo { position: absolute; left: 254px; top: 353px; font: 500 15px/20px Roboto, sans-serif; text-shadow: 0 0 2px #fff, 0 0 2px #fff; }
.b { color: #4285f4; }
.r { color: #ea4335; }
.y { color: #fbbc04; }
.g { color: #34a853; }
.zoomer { position: absolute; right: 10px; top: 285px; width: 40px; padding: 0 5px; background: #fff; border-radius: 2px; box-shadow: 0 1px 4px rgba(0, 0, 0, .3); }
.zoomer button { width: 30px; height: 40px; display: grid; place-items: center; }
.zoomer button + button { border-top: 1px solid #e0e0e0; }

.form { display: flex; flex-direction: column; }
.form h2 { margin-bottom: 10px; }
.pair { display: grid; grid-template-columns: 1fr 1fr; gap: 30px; }
.form input, .form textarea {
  width: 100%;
  min-width: 0;
  border: 0;
  border-bottom: 1px solid #ddd;
  padding: 0 12px;
  font: inherit;
  background: none;
  outline: 0;
}
.form input { height: 55px; margin-bottom: 15px; }
.form textarea { height: 133px; padding-top: 6px; margin-bottom: 15px; resize: vertical; }
.form ::placeholder { color: #999; opacity: 1; }
.form button { height: 50px; background: #d90028; color: #fff; font-weight: 700; }
```
